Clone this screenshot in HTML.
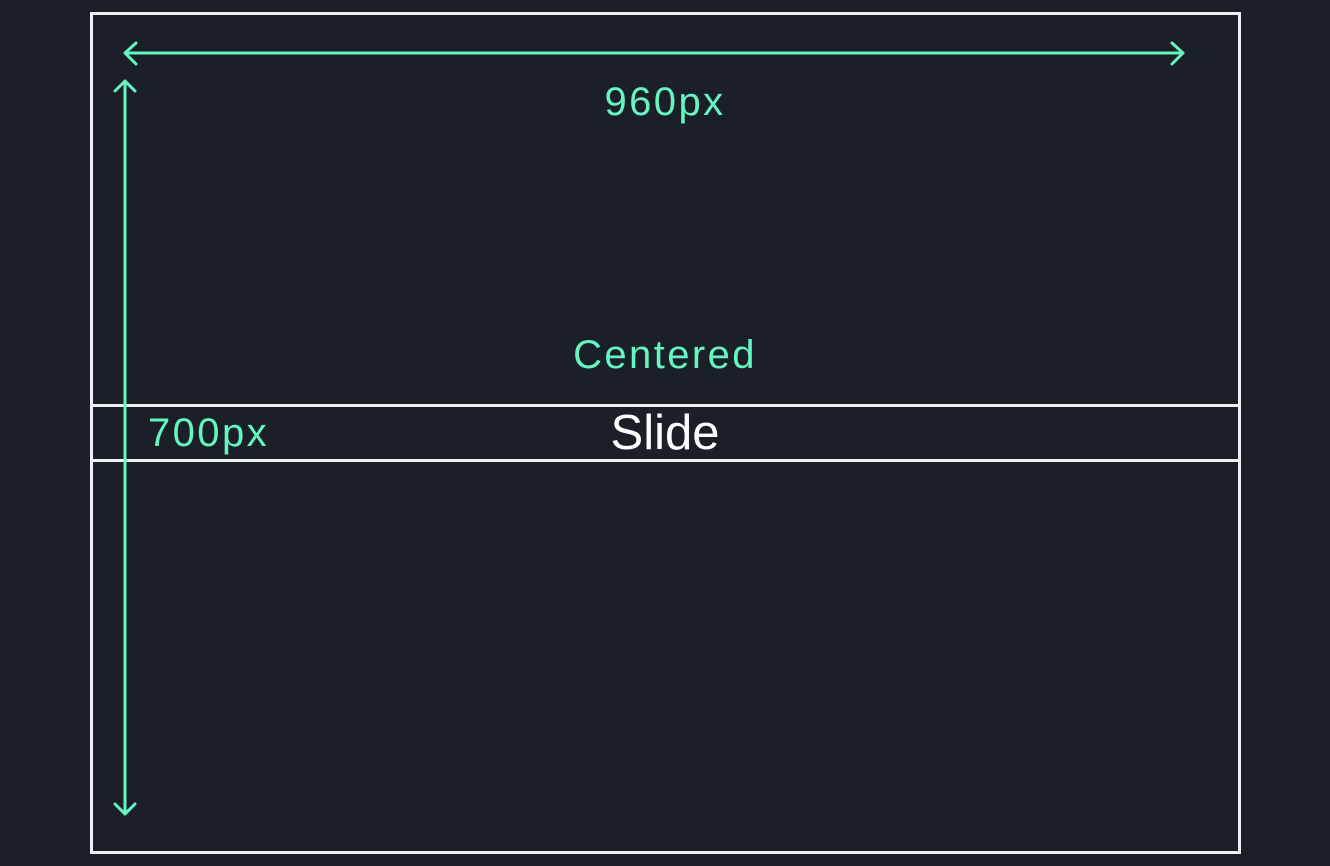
<!DOCTYPE html>
<html><head><style>
html,body{margin:0;padding:0;background:#1b1f27;width:1330px;height:866px;overflow:hidden;font-family:"Liberation Sans",sans-serif}
.box{position:absolute;left:90px;top:12px;width:1145px;height:836px;border:3px solid #eef0f2}
.strip{position:absolute;left:90px;top:404px;width:1151px;height:52px;border-top:3px solid #eef0f2;border-bottom:3px solid #eef0f2}
.t{position:absolute;color:#64f5c0;font-size:40px;letter-spacing:2.4px;white-space:nowrap}
</style></head><body>
<div class="box"></div>
<div class="strip"></div>
<svg width="1330" height="866" style="position:absolute;left:0;top:0" fill="none" stroke="#64f5c0" stroke-width="3" stroke-linecap="round" stroke-linejoin="round">
<path d="M125 53H1183M136 43L125 53L136 64M1172 43L1183 53L1172 64"/>
<path d="M125 81V814M115 91L125 81L135 91M115 804L125 814L135 804"/>
</svg>
<div class="t" style="left:0;width:1330px;text-align:center;top:80px">960px</div>
<div class="t" style="left:0;width:1330px;text-align:center;top:333px">Centered</div>
<div class="t" style="left:148px;top:411px">700px</div>
<div style="position:absolute;left:0;width:1330px;text-align:center;top:405px;color:#fff;font-size:49px">Slide</div>
</body></html>
